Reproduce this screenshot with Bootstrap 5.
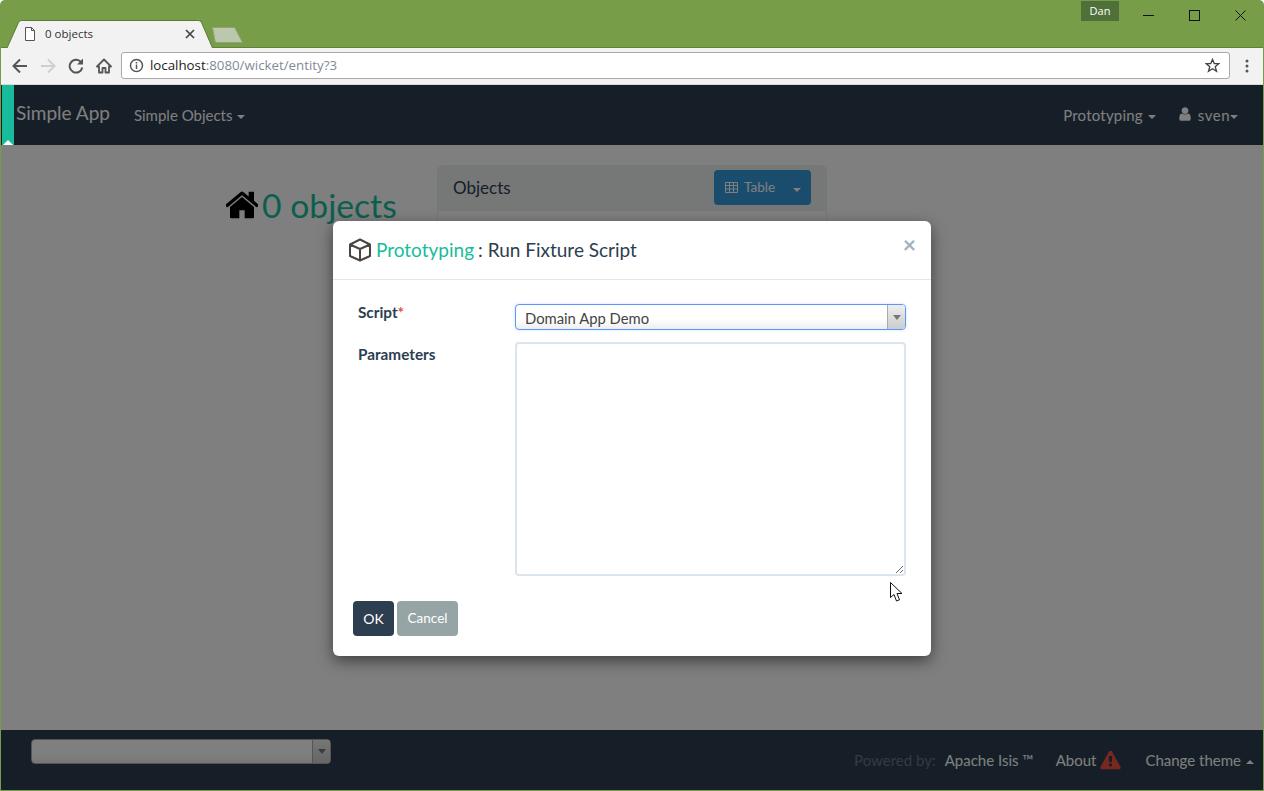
<!DOCTYPE html>
<html lang="en">
<head>
<meta charset="utf-8">
<title>0 objects</title>
<link href="https://cdn.jsdelivr.net/npm/bootstrap@5.3.0/dist/css/bootstrap.min.css" rel="stylesheet">
<style>
html,body{height:100%;margin:0;background:#fff;overflow:hidden}
body{font-family:Lato,"Liberation Sans",sans-serif;font-size:15px;color:#2c3e50}
.win{height:791px;display:flex;flex-direction:column;background:#789d49;border-radius:5px 5px 0 0;padding:0 1px 1px}
.strip{height:48px;display:flex;flex:none;padding-left:6px;position:relative;background:linear-gradient(transparent 47px,#5f8036 47px)}
.tabx{position:relative;width:204px;height:28px;margin-top:20px;display:flex;align-items:center;padding:0 16px 0 17px;font-family:"Open Sans","Liberation Sans",sans-serif;font-size:11.5px;color:#333}
.tabx svg.shape{position:absolute;left:0;top:0}
.tabx>span,.tabx>svg.ico{position:relative}
.tabx .ttl{margin-left:9px;flex:1}
.newtab{margin-top:27px;flex:none}
.whobadge{margin-left:auto;margin-top:1px;width:38px;height:20px;background:#50703a;color:#fff;font-family:"Open Sans","Liberation Sans",sans-serif;font-size:11px;display:flex;align-items:center;justify-content:center}
.winbtns{display:flex;padding:10px 17px 0 24px;gap:35px;height:22px}
.tools{height:37px;flex:none;background:#f2f2f2;display:flex;align-items:center;padding:0 9px 1px 9px;border-bottom:1px solid #d8d8d8}
.tools .nb{display:flex;gap:8px;margin-right:7px}
.omni{flex:1;height:27px;background:#fff;border:1px solid #a9a9a9;border-radius:3px;display:flex;align-items:center;padding:0 9px 0 7px;font-family:"Open Sans","Liberation Sans",sans-serif;font-size:13.3px;color:#7f8b98}
.omni b{font-weight:400;color:#222}
.omni .url{margin-left:6px;flex:1}
.dots{margin-left:15px;margin-right:5px}
.pagex{flex:1;position:relative;background:#fff;display:flex;flex-direction:column;min-height:0}
.topnav{background:#2c3e50;height:60px;padding:0 25px 0 0;flex:none;align-items:stretch;flex-wrap:nowrap}
.accent{width:12px;margin-left:1px;background:#18bc9c;position:relative;z-index:15}
.accent::after{content:"";position:absolute;left:1px;bottom:0;border:5px solid transparent;border-top:0;border-bottom-color:#fff}
.topnav .navbar-brand{color:#fff;font-size:19px;padding:0;margin:0 0 0 2px;align-self:center;position:relative;top:-2px}
.topnav .nav-link,.botnav .lnk{color:#fff;font-size:15px;padding:0}
.navbar-nav.navmain{flex-direction:row;align-items:center;margin-left:24px}
.navbar-nav.navright{flex-direction:row;align-items:center;margin-left:auto;gap:21px}
.navright .nav-link svg{vertical-align:-1px;margin-right:5px}
.dropdown-toggle::after{margin-left:5px;vertical-align:2px;border-width:4px 4px 0}
.tightc::after{margin-left:0}
.tightw{letter-spacing:.5px}
.widep{letter-spacing:.2px}
.mainx{flex:1;display:flex;align-items:flex-start;padding:20px 0 0 225px;min-height:0;overflow:hidden}
.headx{width:211px;display:flex;align-items:center;margin-top:20px;color:#18bc9c;font-size:33.7px;line-height:40px;gap:4px;white-space:nowrap}
.objpanel{width:390px;height:80px;border:1px solid #ecf0f1;border-top:0;border-radius:4px 4px 0 0;background:#fff}
.objhead{height:46px;background:#ecf0f1;display:flex;align-items:center;justify-content:space-between;padding:0 15px;font-size:17px;color:#2c3e50;border:0;border-radius:3px 3px 0 0}
.tblgrp{margin-top:-1px}
.tblbtn{background:#3498db;border:0;color:#fff;font-size:13.5px;height:35px;display:flex;align-items:center;gap:6px;padding:0 7px 0 11px;width:69px;border-radius:4px 0 0 4px}
.btn-group>.tblcar{background:#3498db;border:0;color:#fff;width:29px;height:35px;padding:0;margin-left:0;border-radius:0 4px 4px 0}
.tblcar::after{margin:0}
.botnav{background:#2c3e50;height:60px;flex:none;display:flex;align-items:flex-start;padding:9px 9px 0 30px}
.sel2{display:flex;background:linear-gradient(#fff 60%,#eee);border:1px solid #aaa;border-radius:4px;overflow:hidden}
.sel2 .val{flex:1;padding-left:8px;font-size:14.8px;line-height:23px;color:#444}
.sel2 .arr{width:18px;background:linear-gradient(#eee,#ccc);border-left:1px solid #aaa;display:flex;align-items:center;justify-content:center}
.sel2 .arr i{display:block;border:4px solid transparent;border-top:5px solid #777;border-bottom:0}
.botsel{width:300px;height:25px}
.botlinks{margin-left:auto;display:flex;align-items:center;margin-top:9px;height:24px}
.poweredx{color:#6a7480;margin-right:9px}
.isislnk{margin-right:22px}
.aboutx{margin-right:24px;display:flex;align-items:center;gap:4px}
.uplnk::after{content:"";display:inline-block;margin-left:5px;vertical-align:2px;border-style:solid;border-width:0 4px 4px;border-color:transparent transparent currentColor}
.shade{position:absolute;inset:0;background:rgba(0,0,0,.5);z-index:10}
.dlg{position:absolute;left:332px;top:136px;width:598px;height:435px;z-index:20;border:0;background:#fff;border-radius:6px;box-shadow:0 5px 15px rgba(0,0,0,.5)}
.dlghead{height:59px;flex:none;padding:0 15px;display:flex;align-items:center;border-bottom:1px solid #e5e5e5;font-size:19px;color:#2c3e50}
.dlghead .proto{color:#18bc9c;margin-left:4px}
.dlghead .rest{margin-left:4px}
.closex{margin-left:auto;position:relative;top:-6px;background:none;border:0;padding:0;color:#9db4c0;font-size:23px;font-weight:700;line-height:1}
.dlgbody{padding:24px 25px 0 25px;flex:1;display:flex;flex-direction:column}
.frow{display:flex;gap:0}
.frow label{width:157px;font-weight:700;font-size:15.3px;color:#2c3e50;flex:none;margin:1px 0 0}
.frow label.first{margin-top:-3px}
.req{color:#e74c3c}
.fsel{width:391px;height:26px;border-color:#5897fb;margin-bottom:12px;box-shadow:0 0 3px rgba(88,151,251,.3)}
.fsel .val{line-height:26px;padding-left:9px}
.fta{width:391px;height:234px;border:2px solid #dce4ec;border-radius:4px;display:block;outline:0}
.dlgfoot{padding:25px 0 20px 20px;display:flex;gap:3px}
.okb{background:#2c3e50;color:#fff;border:0;width:41px;height:35px;font-size:14px;padding:0;border-radius:4px}
.cnb{background:#95a5a6;color:#fff;border:0;width:61px;height:35px;font-size:13.5px;padding:0;border-radius:4px}
.ptr{position:absolute;left:888px;top:497px;z-index:30}
</style>
</head>
<body>
<div class="win">
  <div class="strip">
    <div class="tabx">
      <svg class="shape" width="206" height="28" viewBox="0 0 206 28"><path d="M0 28L11.500 2.500Q12.500 .5 14.500 .5H191.500Q193.500 .5 194.500 2.500L205.500 28" fill="#f2f2f2" stroke="#5b7a35"/></svg>
      <svg class="ico" width="12" height="14" viewBox="0 0 12 14"><path d="M1.500.5H7.500L10.500 3.500V13.500H1.500ZM7.500.5V3.500H10.500" fill="#fff" stroke="#555"/></svg>
      <span class="ttl">0 objects</span>
      <svg class="ico" width="10" height="10" viewBox="0 0 10 10"><path d="M1 1L9 9M9 1L1 9" stroke="#444" stroke-width="1.700"/></svg>
    </div>
    <svg class="newtab" width="33" height="17" viewBox="0 0 33 17"><path d="M1.500 .5H22.500C23.500 .5 24 1 24.500 2L31.500 15.500H6C5 15.500 4.500 15 4 14Z" fill="#bcc8ae" stroke="#8ea571"/></svg>
    <div class="whobadge">Dan</div>
    <div class="winbtns">
      <svg width="11" height="11" viewBox="0 0 11 11"><path d="M0 5.500H11" stroke="#111"/></svg>
      <svg width="11" height="11" viewBox="0 0 11 11"><rect x=".5" y=".5" width="10" height="10" fill="none" stroke="#111"/></svg>
      <svg width="11" height="11" viewBox="0 0 11 11"><path d="M.5 .5L10.500 10.500M10.500 .5L.5 10.500" stroke="#111"/></svg>
    </div>
  </div>
  <div class="tools">
    <div class="nb">
      <svg width="20" height="20" viewBox="0 0 20 20"><path d="M17 10H4M10 3.500L3.500 10L10 16.500" fill="none" stroke="#555" stroke-width="2"/></svg>
      <svg width="20" height="20" viewBox="0 0 20 20"><path d="M3 10H16M10 3.500L16.500 10L10 16.500" fill="none" stroke="#cfcfcf" stroke-width="2"/></svg>
      <svg width="20" height="20" viewBox="0 0 20 20"><path d="M15.600 7A6.400 6.400 0 1 0 16.300 11.500" fill="none" stroke="#555" stroke-width="2"/><path d="M17 2.500V8.500H11Z" fill="#555"/></svg>
      <svg width="20" height="20" viewBox="0 0 20 20"><path d="M10 3.500L3 10.500H5V16.500H8.500V12H11.500V16.500H15V10.500H17Z" fill="none" stroke="#555" stroke-width="1.800" stroke-linejoin="round"/></svg>
    </div>
    <div class="omni">
      <svg width="15" height="15" viewBox="0 0 15 15"><circle cx="7.500" cy="7.500" r="6" fill="none" stroke="#555" stroke-width="1.500"/><path d="M7.500 6.500V11M7.500 4V5.500" stroke="#555" stroke-width="1.500"/></svg>
      <span class="url"><b>localhost</b>:8080/wicket/entity?3</span>
      <svg width="15" height="15" viewBox="0 0 16 16"><path d="M8 1.500L9.900 6H14.800L10.900 9.200L12.300 14.200L8 11.400L3.700 14.200L5.100 9.200L1.200 6H6.100Z" fill="none" stroke="#444" stroke-width="1.400"/></svg>
    </div>
    <svg class="dots" width="4" height="14" viewBox="0 0 4 14"><circle cx="2" cy="2" r="1.500" fill="#555"/><circle cx="2" cy="7" r="1.500" fill="#555"/><circle cx="2" cy="12" r="1.500" fill="#555"/></svg>
  </div>
  <div class="pagex">
    <nav class="navbar topnav">
      <div class="accent"></div>
      <a class="navbar-brand" href="#">Simple App</a>
      <ul class="navbar-nav navmain">
        <li class="nav-item"><a class="nav-link dropdown-toggle" href="#">Simple Objects</a></li>
      </ul>
      <ul class="navbar-nav navright">
        <li class="nav-item"><a class="nav-link dropdown-toggle widep" href="#">Prototyping</a></li>
        <li class="nav-item"><a class="nav-link dropdown-toggle tightc tightw" href="#"><svg width="16" height="16" viewBox="0 0 1792 1792" fill="currentColor"><path d="M1536 1399q0 109-62.500 187t-150.500 78h-854q-88 0-150.500-78t-62.500-187q0-85 8.500-160.500t31.500-152 58.500-131 94-89 134.500-34.500q131 128 313 128t313-128q76 0 134.500 34.500t94 89 58.500 131 31.500 152 8.500 160.500zm-256-887q0 159-112.500 271.500t-271.500 112.500-271.500-112.500-112.500-271.500 112.500-271.500 271.500-112.500 271.500 112.500 112.500 271.500z"/></svg>sven</a></li>
      </ul>
    </nav>
    <div class="mainx">
      <div class="headx">
        <svg width="32" height="32" viewBox="128 128 1536 1536" fill="#000"><path d="M1472 992v480q0 26-19 45t-45 19h-384v-384h-256v384h-384q-26 0-45-19t-19-45v-480q0-1 .5-3t.5-3l575-474 575 474q1 2 1 6zm223-69l-62 74q-8 9-21 11h-3q-13 0-21-7l-692-577-692 577q-12 8-24 7-13-2-21-11l-62-74q-8-10-7-23.500t11-21.500l719-599q32-26 76-26t76 26l244 204v-195q0-14 9-23t23-9h192q14 0 23 9t9 23v408l219 182q10 8 11 21.500t-7 23.500z"/></svg>
        <span>0 objects</span>
      </div>
      <div class="card objpanel">
        <div class="card-header objhead">
          <span>Objects</span>
          <div class="btn-group tblgrp">
            <button type="button" class="btn tblbtn"><svg width="13" height="11" viewBox="0 0 13 11"><path d="M.5 .5H12.500V10.500H.5ZM.5 3.500H12.500M.5 7H12.500M4.500 .5V10.500M8.500 .5V10.500" fill="none" stroke="#fff"/></svg>Table</button>
            <button type="button" class="btn tblcar dropdown-toggle" aria-label="More"></button>
          </div>
        </div>
      </div>
    </div>
    <footer class="botnav">
      <div class="sel2 botsel"><div class="val"></div><div class="arr"><i></i></div></div>
      <div class="botlinks">
        <span class="poweredx">Powered by:</span>
        <a class="lnk text-decoration-none isislnk" href="#">Apache Isis ™</a>
        <a class="lnk text-decoration-none aboutx" href="#">About <svg width="21" height="19" viewBox="0 0 1792 1664" fill="#f05040"><path transform="translate(0 -64)" d="M1024 1375v-190q0-14-9.500-23.500t-22.500-9.500h-192q-13 0-22.500 9.500t-9.500 23.500v190q0 14 9.500 23.500t22.500 9.500h192q13 0 22.500-9.500t9.500-23.500zm-2-374l18-459q0-12-10-19-13-11-24-11h-220q-11 0-24 11-10 7-10 21l17 457q0 10 10 16.500t24 6.500h185q14 0 23.500-6.500t10.500-16.500zm-14-934l768 1408q35 63-2 126-17 29-46.500 46t-63.500 17h-1536q-34 0-63.500-17t-46.500-46q-37-63-2-126l768-1408q17-31 47-49t65-18 65 18 47 49z"/></svg></a>
        <a class="lnk text-decoration-none uplnk" href="#">Change theme</a>
      </div>
    </footer>
    <div class="shade"></div>
    <div class="modal-content dlg">
      <div class="dlghead">
        <svg width="24" height="24" viewBox="0 0 24 24"><path d="M12 1.500L22 6.500V18L12 22.500L2 18V6.500ZM2 6.500L12 11V22.500M22 6.500L12 11" fill="none" stroke="#4a4540" stroke-width="2" stroke-linejoin="round"/></svg>
        <span class="proto">Prototyping</span><span class="rest">: Run Fixture Script</span>
        <button type="button" class="closex" aria-label="Close">×</button>
      </div>
      <div class="dlgbody">
        <div class="frow">
          <label class="first">Script<span class="req">*</span></label>
          <div class="sel2 fsel"><div class="val">Domain App Demo</div><div class="arr"><i></i></div></div>
        </div>
        <div class="frow">
          <label>Parameters</label>
          <textarea class="fta" aria-label="Parameters"></textarea>
        </div>
      </div>
      <div class="dlgfoot">
        <button type="button" class="btn okb">OK</button>
        <button type="button" class="btn cnb">Cancel</button>
      </div>
    </div>
    <svg class="ptr" width="15" height="21" viewBox="0 0 15 21"><path d="M1.500 .5V15.500L5 12.500L7.500 19L10.500 17.800L8 11.500H13Z" fill="#fff" stroke="#111"/></svg>
  </div>
</div>
</body>
</html>
